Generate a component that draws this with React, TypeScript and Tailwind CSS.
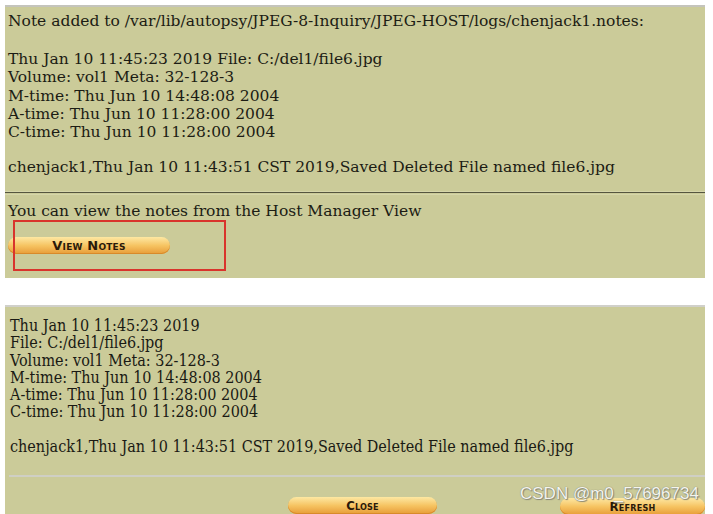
import React from "react";

const topSerif = { fontFamily: '"DejaVu Serif", serif' };
const bottomSerif = {
  fontFamily: '"DejaVu Serif Condensed", "DejaVu Serif", serif',
  fontStretch: "condensed",
};

function PillButton({ label, className = "" }: { label: string; className?: string }) {
  return (
    <div
      className={`flex items-center justify-center rounded-full bg-gradient-to-b from-[#fde8a2] via-[#f6c462] to-[#e79c36] shadow-[inset_0_-1px_0_#d88a2a] ${className}`}
    >
      <span
        className="text-[13px] font-bold leading-none tracking-[0.2px] text-[#2a1a0a] [font-variant:small-caps]"
        style={{ fontFamily: '"DejaVu Sans", "Liberation Sans", sans-serif' }}
      >
        {label}
      </span>
    </div>
  );
}

export default function App() {
  return (
    <div className="relative h-[514px] w-[713px] overflow-hidden bg-white">
      {/* first panel: note added */}
      <div
        className="ml-[5px] mt-[5px] h-[273px] w-[700px] border-t-2 border-[#c4c4bc] bg-[#cbcb99] pl-[3px] text-[15.5px] text-[#1c1c14]"
        style={topSerif}
      >
        <div className="pt-[5px] leading-[18px]">
          Note added to /var/lib/autopsy/JPEG-8-Inquiry/JPEG-HOST/logs/chenjack1.notes:
        </div>
        <div className="mt-[20px] leading-[18.3px]">
          <div>Thu Jan 10 11:45:23 2019 File: C:/del1/file6.jpg</div>
          <div>Volume: vol1 Meta: 32-128-3</div>
          <div>M-time: Thu Jun 10 14:48:08 2004</div>
          <div>A-time: Thu Jun 10 11:28:00 2004</div>
          <div>C-time: Thu Jun 10 11:28:00 2004</div>
        </div>
        <div className="mt-[17px] leading-[18px]">
          chenjack1,Thu Jan 10 11:43:51 CST 2019,Saved Deleted File named file6.jpg
        </div>
        <div className="-ml-[3px] mt-[15px] h-[4px] border-y border-[#d6d6aa] bg-[#cbcb99]">
          <div className="h-[2px] border-t border-[#55553f]" />
        </div>
        <div className="mt-[7px] leading-[18px]">You can view the notes from the Host Manager View</div>
        <div className="relative mt-[17px]">
          <PillButton label="View Notes" className="h-[17px] w-[162px]" />
          <div className="absolute left-[5px] top-[-17px] h-[51px] w-[213px] border-2 border-[#d9342c]" />
        </div>
      </div>

      {/* second panel: notes viewer */}
      <div
        className="ml-[5px] mt-[27px] h-[209px] w-[700px] border-t-2 border-[#d0d0ca] bg-[#cbcb99] pl-[5px] text-[16px] text-[#1a1a14]"
        style={bottomSerif}
      >
        <div className="pt-[10px] leading-[17.3px]">
          <div>Thu Jan 10 11:45:23 2019</div>
          <div>File: C:/del1/file6.jpg</div>
          <div>Volume: vol1 Meta: 32-128-3</div>
          <div>M-time: Thu Jun 10 14:48:08 2004</div>
          <div>A-time: Thu Jun 10 11:28:00 2004</div>
          <div>C-time: Thu Jun 10 11:28:00 2004</div>
        </div>
        <div className="mt-[17px] leading-[17.3px]">
          chenjack1,Thu Jan 10 11:43:51 CST 2019,Saved Deleted File named file6.jpg
        </div>
        <div className="-ml-[1px] mt-[20px] h-[2px] bg-[#cfcfc4]" />
        <div className="relative mt-[20px] flex">
          <PillButton label="Close" className="ml-[278px] h-[17px] w-[149px]" />
          <PillButton label="Refresh" className="ml-[123px] mt-[1px] h-[17px] w-[145px]" />
          <div
            className="absolute left-[510px] top-[-12px] text-[17px] leading-none text-[#f4f4ee] [text-shadow:0_0_1px_#6a6a5a,1px_1px_1px_#8a8a7a]"
            style={{ fontFamily: '"Liberation Sans", Arial, sans-serif' }}
          >
            CSDN @m0_57696734
          </div>
        </div>
      </div>
    </div>
  );
}
